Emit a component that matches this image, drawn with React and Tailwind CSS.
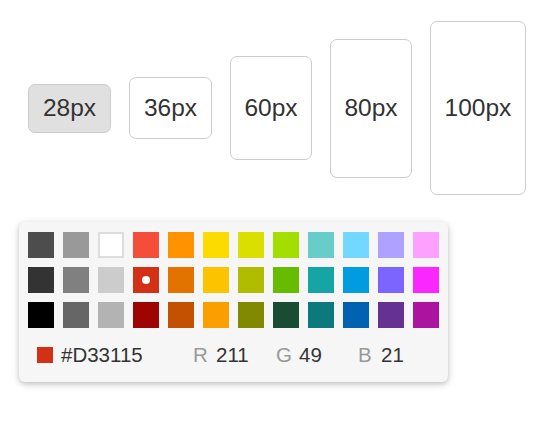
import React from 'react';

const sizes = [
  { label: '28px', w: 'w-[83px]', h: 'h-[49px]', active: true },
  { label: '36px', w: 'w-[83px]', h: 'h-[62px]' },
  { label: '60px', w: 'w-[82px]', h: 'h-[104px]' },
  { label: '80px', w: 'w-[82px]', h: 'h-[139px]' },
  { label: '100px', w: 'w-[96px]', h: 'h-[174px]' },
];

const colors = [
  '#4D4D4D', '#999999', '#FFFFFF', '#F44E3B', '#FE9200', '#FCDC00', '#DBDF00', '#A4DD00', '#68CCCA', '#73D8FF', '#AEA1FF', '#FDA1FF',
  '#333333', '#808080', '#CCCCCC', '#D33115', '#E27300', '#FCC400', '#B0BC00', '#68BC00', '#16A5A5', '#009CE0', '#7B64FF', '#FA28FF',
  '#000000', '#666666', '#B3B3B3', '#9F0500', '#C45100', '#FB9E00', '#808900', '#194D33', '#0C797D', '#0062B1', '#653294', '#AB149E',
];

const selected = '#D33115';

export default function App() {
  return (
    <div className="w-[538px] h-[421px] bg-white text-[#333] font-['Liberation_Sans',Arial,sans-serif]">
      <div className="flex items-center gap-[18px] pt-[21px] pl-[28px]">
        {sizes.map((s) => (
          <button
            key={s.label}
            className={`${s.w} ${s.h} flex items-center justify-center border border-[#cccccc] rounded-[7px] text-[24.5px] ${
              s.active ? 'bg-[#e0e0e0]' : 'bg-white'
            }`}
          >
            {s.label}
          </button>
        ))}
      </div>

      {/* compact colour picker */}
      <div className="mt-[27px] ml-[19px] w-[429px] h-[160px] flex flex-col bg-[#f6f6f6] rounded-[6px] shadow-[0_2px_10px_rgba(0,0,0,0.12),0_2px_5px_rgba(0,0,0,0.16)]">
        <div className="grid grid-cols-[repeat(12,26px)] gap-[9px] pt-[10px] pl-[9px]">
          {colors.map((c) => (
            <div
              key={c}
              className={`w-[26px] h-[26px] flex items-center justify-center ${
                c === '#FFFFFF' ? 'shadow-[inset_0_0_0_2px_#dddddd]' : ''
              }`}
              style={{ background: c }}
            >
              {c === selected && <div className="w-[8px] h-[8px] rounded-full bg-white" />}
            </div>
          ))}
        </div>
        <div className="flex-1 flex items-center text-[20.5px]">
          <div className="ml-[18px] w-[16px] h-[16px]" style={{ background: selected }} />
          <span className="ml-[8px] w-[131px]">{selected}</span>
          <div className="w-[83px] flex">
            <span className="w-[24px] pl-[1px] text-[#999]">R</span>
            <span>211</span>
          </div>
          <div className="w-[82px] flex">
            <span className="w-[24px] pl-[1px] text-[#999]">G</span>
            <span>49</span>
          </div>
          <div className="flex">
            <span className="w-[24px] pl-[1px] text-[#999]">B</span>
            <span>21</span>
          </div>
        </div>
      </div>
    </div>
  );
}
